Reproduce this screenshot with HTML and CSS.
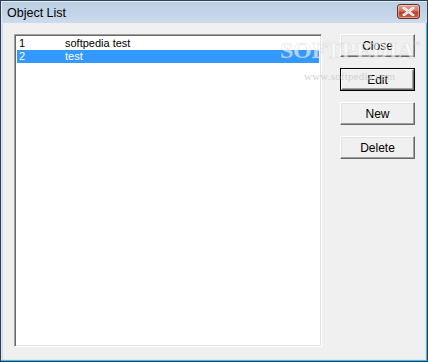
FILE: index.html
```html
<!DOCTYPE html>
<html>
<head>
<meta charset="utf-8">
<link rel="stylesheet" href="styles.css">
</head>
<body>
<div class="window">
  <div class="titlebar">
    <span class="title">Object List</span>
    <span class="xbtn"><svg width="15" height="9" viewBox="0 0 15 9"><path d="M3 1 L12 8 M12 1 L3 8" stroke="#fff" stroke-width="2.6" stroke-linecap="square"/><path d="M3 1 L12 8 M12 1 L3 8" stroke="#6b2a22" stroke-width="0.6" fill="none" opacity="0.4"/></svg></span>
  </div>
  <div class="frame">
    <div class="client">
      <div class="list">
        <div class="row"><span class="num">1</span><span>softpedia test</span></div>
        <div class="row sel"><span class="num">2</span><span>test</span></div>
      </div>
      <div class="buttons">
        <div class="btn">Close</div>
        <div class="btn default"><div class="inner">Edit</div></div>
        <div class="btn">New</div>
        <div class="btn">Delete</div>
      </div>
      <div class="watermark">
        <span class="wm-big">SOFTPEDIA</span><span class="wm-tm">™</span>
        <span class="wm-url">www.softpedia.com</span>
      </div>
    </div>
  </div>
</div>
</body>
</html>
```
FILE: styles.css
```css
html, body {
  margin: 0;
  padding: 0;
  background: #f0f0f0;
}
body {
  font-family: "Liberation Sans", Arial, sans-serif;
  font-size: 11px;
  color: #000;
}
.window {
  width: 428px;
  height: 362px;
  box-sizing: border-box;
  border: 1px solid #2e3d4f;
  display: flex;
  flex-direction: column;
  background: #bfd1e5;
}
.titlebar {
  height: 22px;
  flex: none;
  display: flex;
  align-items: center;
  justify-content: space-between;
  padding: 0 7px 0 6px;
  background: linear-gradient(to bottom, #b9cde2 0%, #c4d5e8 60%, #cddcec 100%);
  box-shadow: inset 1px 1px 0 #e4edf6;
}
.title {
  font-size: 12.5px;
  color: #000;
  padding-top: 1px;
}
.xbtn {
  width: 23px;
  height: 15px;
  box-sizing: border-box;
  margin-top: -2px;
  border: 1px solid #6a2e28;
  border-radius: 3px;
  background: linear-gradient(to bottom, #e3a497 0%, #d3765f 45%, #b7422a 55%, #c7604a 100%);
  display: flex;
  align-items: center;
  justify-content: center;
  box-shadow: inset 0 0 0 1px rgba(255,220,210,0.5);
}
.xbtn svg { display: block; }
.frame {
  flex: 1;
  display: flex;
  padding: 0 2px 2px 2px;
  background: #c2dcef;
  box-shadow: inset -1px -1px 0 #35c2ea, inset 1px 0 0 #dde9f4;
}
.client {
  flex: 1;
  position: relative;
  display: flex;
  align-items: flex-start;
  background: #f0f0f0;
  padding: 11px 0 11px 11px;
  box-shadow: 1px 1px 0 #dbe7f3;
}
.list {
  width: 308px;
  height: 313px;
  box-sizing: border-box;
  background: #fff;
  border: 1px solid;
  border-color: #a0a0a0 #fff #fff #a0a0a0;
  box-shadow: inset 1px 1px 0 #696969, inset -1px -1px 0 #e3e3e3;
  padding: 2px 2px;
}
.row {
  height: 13px;
  line-height: 13px;
  display: flex;
  padding-left: 2px;
  white-space: nowrap;
}
.row .num {
  width: 46px;
  flex: none;
}
.row.sel {
  background: #3399ff;
  color: #fff;
}
.buttons {
  margin-left: 18px;
  display: flex;
  flex-direction: column;
  gap: 11px;
}
.btn {
  width: 75px;
  height: 23px;
  box-sizing: border-box;
  border: 1px solid;
  border-color: #fff #696969 #696969 #fff;
  box-shadow: inset -1px -1px 0 #a0a0a0, inset 1px 1px 0 #e3e3e3;
  background: #f0f0f0;
  display: flex;
  align-items: center;
  justify-content: center;
  font-size: 12px;
}
.btn.default {
  border: 1px solid #000;
  box-shadow: none;
  padding: 0;
}
.btn.default .inner {
  width: 100%;
  height: 100%;
  box-sizing: border-box;
  border: 1px solid;
  border-color: #fff #696969 #696969 #fff;
  box-shadow: inset -1px -1px 0 #a0a0a0;
  display: flex;
  align-items: center;
  justify-content: center;
}
.watermark {
  position: absolute;
  left: 277px;
  top: 14px;
  width: 140px;
  pointer-events: none;
}
.wm-big {
  font-family: "Liberation Serif", "Times New Roman", serif;
  font-weight: bold;
  font-size: 24px;
  letter-spacing: -0.3px;
  color: rgba(255,255,255,0.6);
  -webkit-text-stroke: 0.6px rgba(170,170,170,0.35);
}
.wm-tm {
  position: absolute;
  left: 132px;
  top: 3px;
  font-size: 8px;
  color: rgba(190,190,190,0.5);
}
.wm-url {
  position: absolute;
  left: 24px;
  top: 33px;
  font-family: "Liberation Serif", serif;
  font-size: 11px;
  color: rgba(200,200,200,0.8);
  letter-spacing: 0.2px;
}
```
